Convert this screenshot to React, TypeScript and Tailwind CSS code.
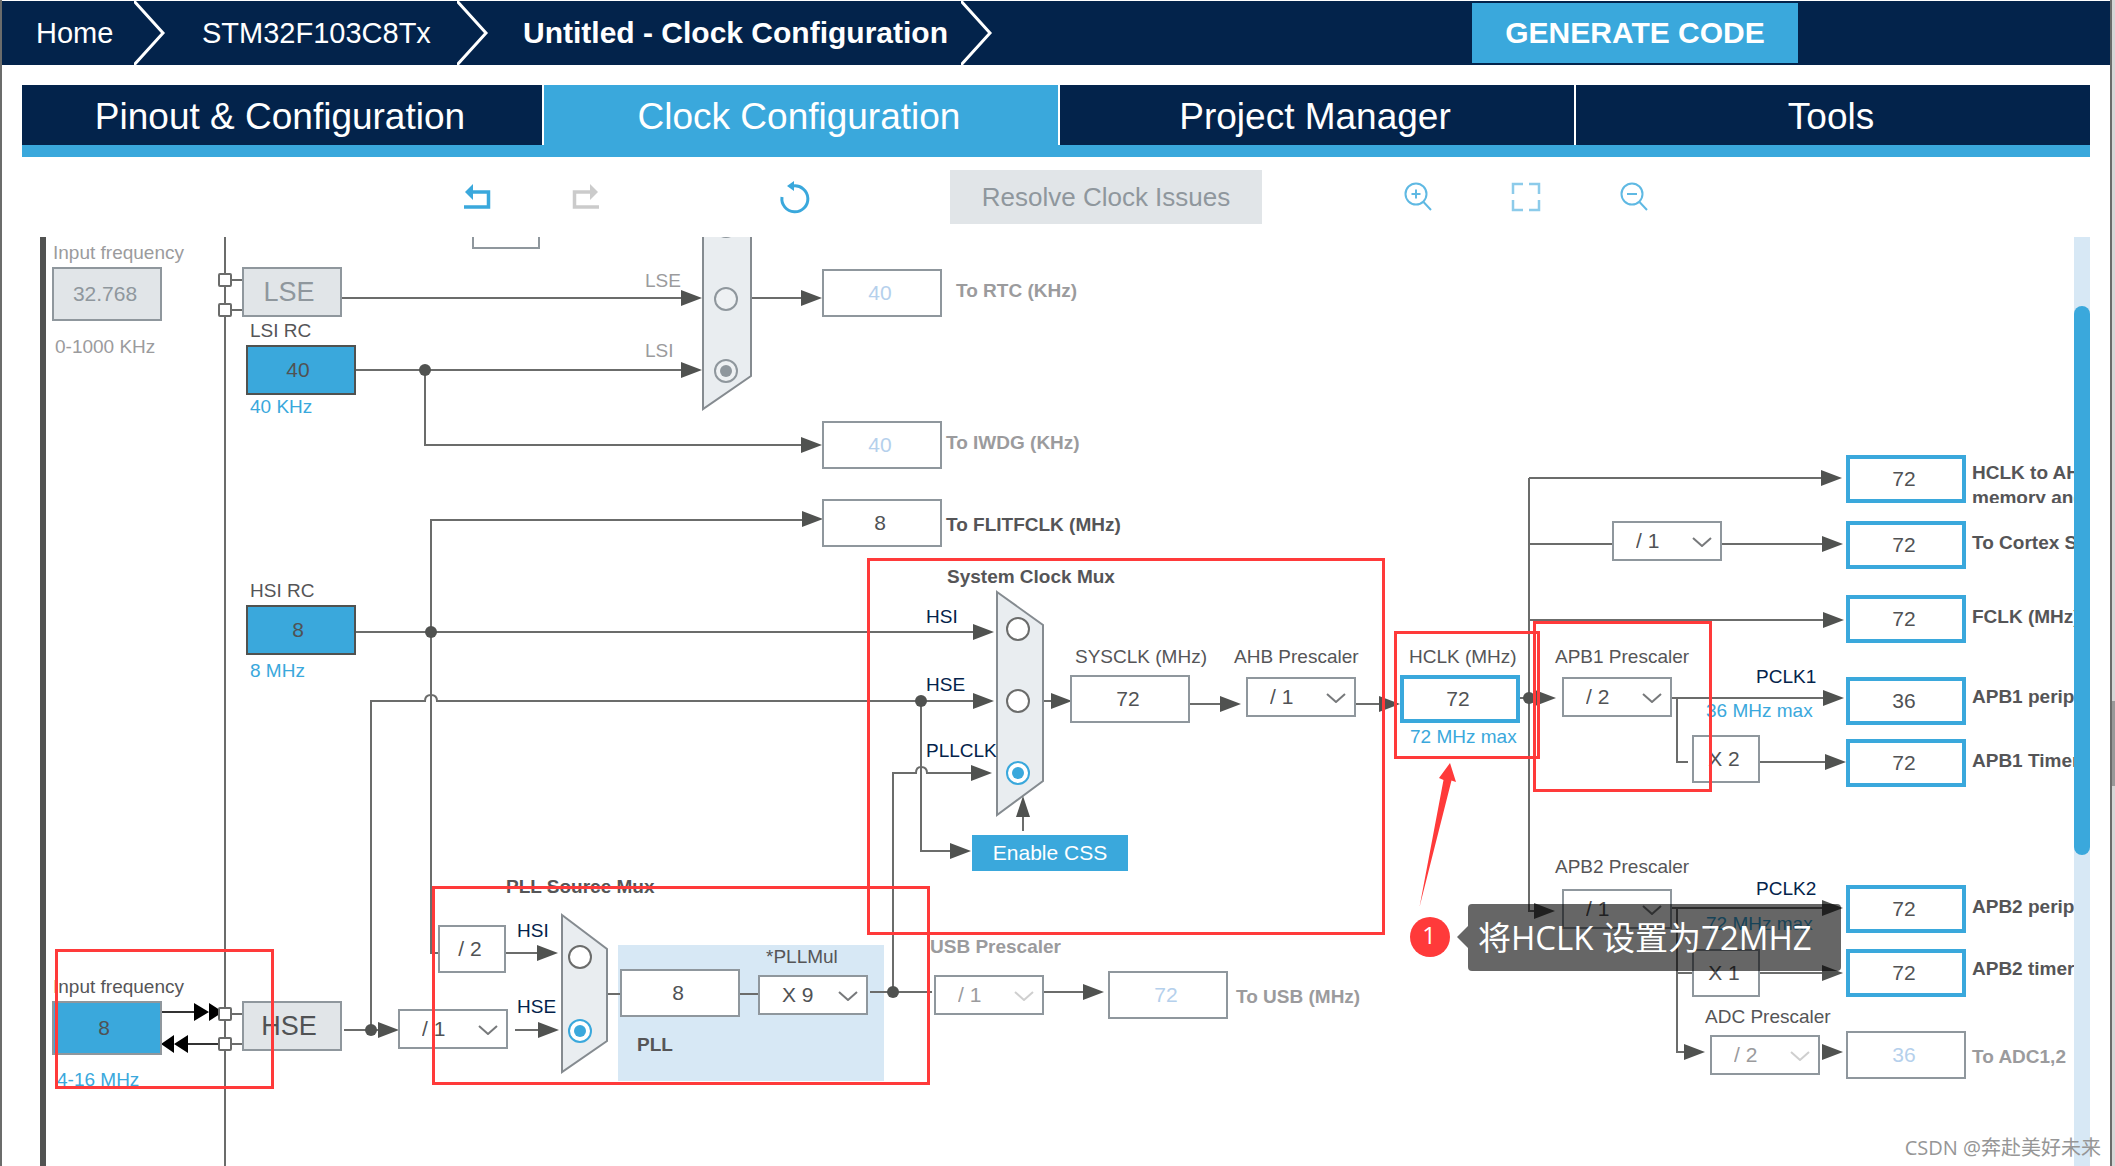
import type { ReactNode } from "react";
import clsx from "clsx";

type Tone = "dark" | "muted" | "navy" | "blue";

const tones: Record<Tone, string> = {
  dark: "text-[#555557]",
  muted: "text-[#9b9b9d]",
  navy: "text-[#03234b]",
  blue: "text-[#3aa8dc]",
};

type LabelItem = {
  x: number;
  y: number; // text baseline
  text: string;
  tone?: Tone;
  bold?: boolean;
  htmlFor?: string;
};

const labels: LabelItem[] = [
  { x: 53, y: 260, text: "Input frequency", tone: "muted", htmlFor: "lse-freq" },
  { x: 55, y: 354, text: "0-1000 KHz", tone: "muted" },
  { x: 250, y: 338, text: "LSI RC" },
  { x: 250, y: 414, text: "40 KHz", tone: "blue" },
  { x: 250, y: 598, text: "HSI RC" },
  { x: 250, y: 678, text: "8 MHz", tone: "blue" },
  { x: 53, y: 994, text: "Input frequency", htmlFor: "hse-freq" },
  { x: 57, y: 1087, text: "4-16 MHz", tone: "blue" },
  { x: 645, y: 288, text: "LSE", tone: "muted" },
  { x: 645, y: 358, text: "LSI", tone: "muted" },
  { x: 956, y: 298, text: "To RTC (KHz)", tone: "muted", bold: true, htmlFor: "rtc" },
  { x: 946, y: 450, text: "To IWDG (KHz)", tone: "muted", bold: true, htmlFor: "iwdg" },
  { x: 946, y: 532, text: "To FLITFCLK (MHz)", bold: true, htmlFor: "flitf" },
  { x: 947, y: 584, text: "System Clock Mux", bold: true },
  { x: 926, y: 624, text: "HSI", tone: "navy", htmlFor: "sys-hsi" },
  { x: 926, y: 692, text: "HSE", tone: "navy", htmlFor: "sys-hse" },
  { x: 926, y: 758, text: "PLLCLK", tone: "navy", htmlFor: "sys-pll" },
  { x: 1075, y: 664, text: "SYSCLK (MHz)", htmlFor: "sysclk" },
  { x: 1234, y: 664, text: "AHB Prescaler", htmlFor: "ahb" },
  { x: 1409, y: 664, text: "HCLK (MHz)", htmlFor: "hclk" },
  { x: 1410, y: 744, text: "72 MHz max", tone: "blue" },
  { x: 1555, y: 664, text: "APB1 Prescaler", htmlFor: "apb1" },
  { x: 1756, y: 684, text: "PCLK1", tone: "navy" },
  { x: 1706, y: 718, text: "36 MHz max", tone: "blue" },
  { x: 1555, y: 874, text: "APB2 Prescaler", htmlFor: "apb2" },
  { x: 1756, y: 896, text: "PCLK2", tone: "navy" },
  { x: 1706, y: 931, text: "72 MHz max", tone: "blue" },
  { x: 1705, y: 1024, text: "ADC Prescaler", htmlFor: "adc-div" },
  { x: 506, y: 894, text: "PLL Source Mux", bold: true },
  { x: 517, y: 938, text: "HSI", tone: "navy", htmlFor: "pll-hsi" },
  { x: 517, y: 1014, text: "HSE", tone: "navy", htmlFor: "pll-hse" },
  { x: 766, y: 964, text: "*PLLMul", htmlFor: "pllmul" },
  { x: 637, y: 1052, text: "PLL", bold: true },
  { x: 930, y: 954, text: "USB Prescaler", tone: "muted", bold: true, htmlFor: "usb-div" },
  { x: 1236, y: 1004, text: "To USB (MHz)", tone: "muted", bold: true, htmlFor: "usb" },
  { x: 1972, y: 550, text: "To Cortex System timer (MHz)", bold: true, htmlFor: "cortex" },
  { x: 1972, y: 624, text: "FCLK (MHz)", bold: true, htmlFor: "fclk" },
  { x: 1972, y: 704, text: "APB1 peripheral clocks (MHz)", bold: true, htmlFor: "apb1-periph" },
  { x: 1972, y: 768, text: "APB1 Timer clocks (MHz)", bold: true, htmlFor: "apb1-timer" },
  { x: 1972, y: 914, text: "APB2 peripheral clocks (MHz)", bold: true, htmlFor: "apb2-periph" },
  { x: 1972, y: 976, text: "APB2 timer clocks (MHz)", bold: true, htmlFor: "apb2-timer" },
  { x: 1972, y: 1064, text: "To ADC1,2", tone: "muted", bold: true, htmlFor: "adc" },
];

type Field = { id: string; x: number; y: number; value: string; kind: "target" | "plain" | "idle" };

const fields: Field[] = [
  { id: "rtc", x: 822, y: 269, value: "40", kind: "idle" },
  { id: "iwdg", x: 822, y: 421, value: "40", kind: "idle" },
  { id: "flitf", x: 822, y: 499, value: "8", kind: "plain" },
  { id: "sysclk", x: 1070, y: 675, value: "72", kind: "plain" },
  { id: "hclk", x: 1400, y: 675, value: "72", kind: "target" },
  { id: "pll-in", x: 620, y: 969, value: "8", kind: "plain" },
  { id: "usb", x: 1108, y: 971, value: "72", kind: "idle" },
  { id: "ahb-bus", x: 1846, y: 455, value: "72", kind: "target" },
  { id: "cortex", x: 1846, y: 521, value: "72", kind: "target" },
  { id: "fclk", x: 1846, y: 595, value: "72", kind: "target" },
  { id: "apb1-periph", x: 1846, y: 677, value: "36", kind: "target" },
  { id: "apb1-timer", x: 1846, y: 739, value: "72", kind: "target" },
  { id: "apb2-periph", x: 1846, y: 885, value: "72", kind: "target" },
  { id: "apb2-timer", x: 1846, y: 949, value: "72", kind: "target" },
  { id: "adc", x: 1846, y: 1031, value: "36", kind: "idle" },
];

const fieldKinds = {
  target: "border-4 border-[#3aa8dc] text-[#505254]",
  plain: "border-2 border-[#8f979d] text-[#505254]",
  idle: "border-2 border-[#8f979d] text-[#b5d0ec]",
};

const dividers = [
  { id: "ahb", x: 1246, y: 677, value: "/ 1" },
  { id: "cortex-div", x: 1612, y: 521, value: "/ 1" },
  { id: "apb1", x: 1562, y: 677, value: "/ 2" },
  { id: "apb2", x: 1562, y: 889, value: "/ 1" },
  { id: "adc-div", x: 1710, y: 1035, value: "/ 2", disabled: true },
  { id: "hse-div", x: 398, y: 1009, value: "/ 1" },
  { id: "pllmul", x: 758, y: 975, value: "X 9" },
  { id: "usb-div", x: 934, y: 975, value: "/ 1", disabled: true },
];

const factors = [
  { x: 438, y: 925, text: "/ 2" },
  { x: 1692, y: 735, text: "X 2" },
  { x: 1692, y: 949, text: "X 1" },
];

const radios = [
  { id: "rtc-hse", name: "rtc-mux", x: 726, y: 226, disabled: true },
  { id: "rtc-lse", name: "rtc-mux", x: 726, y: 299, disabled: true },
  { id: "rtc-lsi", name: "rtc-mux", x: 726, y: 371, disabled: true, checked: true },
  { id: "sys-hsi", name: "sys-mux", x: 1018, y: 629 },
  { id: "sys-hse", name: "sys-mux", x: 1018, y: 701 },
  { id: "sys-pll", name: "sys-mux", x: 1018, y: 773, checked: true },
  { id: "pll-hsi", name: "pll-mux", x: 580, y: 957 },
  { id: "pll-hse", name: "pll-mux", x: 580, y: 1031, checked: true },
];

const wires = [
  "M225 237V1166",
  "M232 280H242M232 310H242M232 1014H242M232 1044H242",
  "M342 298H690M751 298H810",
  "M356 370H690M425 370V445H810",
  "M356 632H980M431 632V520H815M431 632V953H438",
  "M371 1030V701H425Q425 695 431 695Q437 695 437 701H980",
  "M344 1030H390",
  "M921 701V851H960",
  "M893 992V773H916Q916 767 921 767Q927 767 927 773H980",
  "M1023 831V810",
  "M1043 701H1060",
  "M1190 704H1230M1356 704H1390",
  "M1520 698H1545M1529 478V911H1540M1529 478H1830",
  "M1529 544H1612M1722 544H1830M1529 620H1830",
  "M1672 698H1830M1677 698V762H1688M1760 762H1830",
  "M1672 908H1830M1677 908V1052H1690M1677 973H1692M1760 973H1830",
  "M506 953H545M515 1030H545",
  "M607 994H620M740 994H758M870 992H932M1044 992H1090",
];

// tips of the right-pointing arrow heads
const heads = [
  [702, 298], [702, 370], [822, 298], [822, 445], [823, 519], [994, 632], [994, 701], [992, 773],
  [971, 851], [1072, 701], [1241, 704], [1400, 704], [1556, 698], [1842, 478], [1843, 544], [1844, 620],
  [1844, 698], [1846, 762], [1555, 911], [1843, 908], [1843, 973], [1705, 1052], [1843, 1052],
  [399, 1030], [558, 953], [559, 1030], [1104, 992],
];

const dots = [[425, 370], [431, 632], [921, 701], [371, 1030], [893, 992], [1529, 698]];

const muxes = [
  "703,150 751,190 751,376 703,409",
  "997,592 1043,625 1043,781 997,815",
  "562,915 607,949 607,1041 562,1072",
];

const marks = [
  { x: 867, y: 558, width: 518, height: 377 },
  { x: 1394, y: 631, width: 146, height: 128 },
  { x: 1533, y: 621, width: 179, height: 171 },
  { x: 55, y: 949, width: 219, height: 140 },
  { x: 432, y: 886, width: 498, height: 199 },
];

const Crumb = ({ children, className }: { children: ReactNode; className: string }) => (
  <>
    <a href="#" className={clsx("leading-none whitespace-nowrap shrink-0", className)}>
      {children}
    </a>
    <svg viewBox="0 0 32 64" className="w-8 h-16 shrink-0" fill="none" stroke="#fff" strokeWidth="3">
      <path d="M0 0L29 32L0 64" />
    </svg>
  </>
);

const ToolButton = ({ label, className, children }: { label: string; className?: string; children: ReactNode }) => (
  <button type="button" aria-label={label} className={clsx("size-7 shrink-0", className)}>
    <svg viewBox="0 0 28 28" className="size-7 overflow-visible" fill="none" stroke="currentColor">
      {children}
    </svg>
  </button>
);

const Toolbar = () => (
  <div className="flex items-center justify-center h-20 text-[#3aa8dc]">
    <ToolButton label="Undo">
      <path d="M0 24H24.5V9H6" strokeWidth="3.5" />
      <path d="M1 9L9 1V17Z" fill="currentColor" stroke="none" />
    </ToolButton>
    <ToolButton label="Redo" className="ml-20 text-[#cbcbcb]">
      <path d="M27 24H2.5V9H20" strokeWidth="3.5" />
      <path d="M26 9L18 1V17Z" fill="currentColor" stroke="none" />
    </ToolButton>
    <ToolButton label="Reset" className="ml-[180px]">
      <path d="M2 14A13 13 0 1 0 13 3" strokeWidth="3" />
      <path d="M7 3L14 -2V8Z" fill="currentColor" stroke="none" />
    </ToolButton>
    <button type="button" disabled className="mx-[142px] w-[312px] h-[54px] shrink-0 bg-[#e1e5e8] text-[26px] text-[#8f979d]">
      Resolve Clock Issues
    </button>
    <ToolButton label="Zoom in" className="text-[#5fb9e3]">
      <circle cx="12" cy="11" r="10.5" strokeWidth="2" />
      <path d="M7.500 11H16.500M12 6.500V15.500M19.500 19L27 27" strokeWidth="2" />
    </ToolButton>
    <ToolButton label="Fit to window" className="ml-20 text-[#8ccbea]">
      <path d="M1 11V1H11M17 1H27V11M27 17V27H17M11 27H1V17" strokeWidth="2.500" />
    </ToolButton>
    <ToolButton label="Zoom out" className="ml-20 text-[#5fb9e3]">
      <circle cx="12" cy="11" r="10.5" strokeWidth="2" />
      <path d="M7 11H17M19.500 19L27 27" strokeWidth="2" />
    </ToolButton>
  </div>
);

const Label = ({ x, y, text, tone = "dark", bold, htmlFor }: LabelItem) => (
  <label
    htmlFor={htmlFor}
    className={clsx("absolute text-[19px] leading-6 whitespace-nowrap", tones[tone], bold && "font-bold")}
    style={{ left: x, top: y - 19 }}
  >
    {text}
  </label>
);

const Divider = ({ id, x, y, value, disabled }: (typeof dividers)[number]) => (
  <div className="absolute" style={{ left: x, top: y }}>
    <select
      id={id}
      aria-label={id}
      defaultValue={value}
      disabled={disabled}
      className={clsx(
        "block appearance-none w-[110px] h-10 pl-[22px] border-2 border-[#8f979d] bg-white text-[21px] opacity-100",
        disabled ? "text-[#9b9b9d]" : "text-[#505254]"
      )}
    >
      <option>{value}</option>
      <option>/ 4</option>
      <option>/ 8</option>
    </select>
    <svg
      viewBox="0 0 20 10"
      className={clsx("absolute right-2.5 top-4 w-5 h-2.5 pointer-events-none", disabled ? "text-[#cfcfcf]" : "text-[#77797b]")}
      fill="none"
      stroke="currentColor"
      strokeWidth="2"
    >
      <path d="M1 1L10 9L19 1" />
    </svg>
  </div>
);

const Wiring = () => (
  <svg width="2115" height="1166" viewBox="0 0 2115 1166" className="absolute left-0 top-0 max-w-none">
    <rect x="618" y="945" width="266" height="136" fill="#d7e8f5" />
    <rect x="40" y="237" width="6" height="929" fill="#525352" />
    <rect x="473" y="200" width="66" height="48" fill="#fff" stroke="#8f979d" strokeWidth="2" />
    <g fill="none" stroke="#6b6c6b" strokeWidth="2">
      {wires.map((d) => (
        <path key={d} d={d} />
      ))}
    </g>
    <g fill="#e9edf0" stroke="#858b90" strokeWidth="2">
      {muxes.map((points) => (
        <polygon key={points} points={points} />
      ))}
    </g>
    <g fill="#505250">
      {heads.map(([x, y]) => (
        <path key={`${x}-${y}`} d={`M${x} ${y}l-21 -8v16z`} />
      ))}
      <path d="M1023 796l-7 21h14z" />
      {dots.map(([cx, cy]) => (
        <circle key={`${cx}-${cy}`} cx={cx} cy={cy} r="6" />
      ))}
    </g>
    {/* crystal in / out */}
    <path d="M162 1012H200M188 1044H218" stroke="#333" strokeWidth="2" />
    <path d="M209 1012l-15 -9v18zM223 1012l-14 -9v18zM161 1044l13 -9v18zM174 1044l14 -9v18z" fill="#000" />
    <g fill="#fff" stroke="#6b6c6b" strokeWidth="2">
      {[280, 310, 1014, 1044].map((cy) => (
        <rect key={cy} x="219" y={cy - 6} width="12" height="12" rx="1" />
      ))}
    </g>
  </svg>
);

const ClockTree = () => (
  <div className="absolute -left-0.5 -top-[237px] w-[2115px] h-[1166px]">
    <Wiring />

    <input
      id="lse-freq"
      defaultValue="32.768"
      disabled
      className="absolute left-[52px] top-[267px] w-[110px] h-[54px] pr-1 border-2 border-[#8f979d] bg-[#e1e5e8] text-center text-[21px] text-[#8f979d]"
    />
    <input
      id="hse-freq"
      defaultValue="8"
      className="absolute left-[52px] top-[1001px] w-[110px] h-[54px] pr-1.5 border-2 border-[#8f979d] bg-[#3aa8dc] text-center text-[21px] text-[#505254]"
    />
    <button
      type="button"
      disabled
      className="absolute left-[242px] top-[267px] w-[100px] h-[50px] pr-1.5 border-2 border-[#8f979d] bg-[#e1e5e8] text-[27px] text-[#8f979d]"
    >
      LSE
    </button>
    <button
      type="button"
      className="absolute left-[242px] top-[1001px] w-[100px] h-[50px] pr-1.5 border-2 border-[#8f979d] bg-[#e1e5e8] text-[27px] text-[#505254]"
    >
      HSE
    </button>
    <output className="absolute left-[246px] top-[345px] w-[110px] h-[50px] pr-1.5 flex items-center justify-center border-2 border-[#505250] bg-[#3aa8dc] text-[21px] text-[#505254]">
      40
    </output>
    <output className="absolute left-[246px] top-[605px] w-[110px] h-[50px] pr-1.5 flex items-center justify-center border-2 border-[#505250] bg-[#3aa8dc] text-[21px] text-[#505254]">
      8
    </output>
    <button type="button" className="absolute left-[972px] top-[835px] w-[156px] h-9 bg-[#3aa8dc] text-[21px] text-white">
      Enable CSS
    </button>

    {fields.map(({ id, x, y, value, kind }) => (
      <input
        key={id}
        id={id}
        aria-label={id}
        defaultValue={value}
        readOnly={kind !== "target"}
        className={clsx("absolute w-[120px] h-12 pr-1 bg-white text-center text-[21px]", fieldKinds[kind])}
        style={{ left: x, top: y }}
      />
    ))}
    {factors.map(({ x, y, text }) => (
      <div
        key={`${x}-${y}`}
        className="absolute w-[68px] h-12 pr-1 flex items-center justify-center border-2 border-[#8f979d] bg-white text-[21px] text-[#505254]"
        style={{ left: x, top: y }}
      >
        {text}
      </div>
    ))}
    {dividers.map((divider) => (
      <Divider key={divider.id} {...divider} />
    ))}
    {radios.map(({ id, name, x, y, disabled, checked }) => (
      <input
        key={id}
        id={id}
        type="radio"
        name={name}
        aria-label={id}
        disabled={disabled}
        defaultChecked={checked}
        className={clsx(
          "absolute size-6 appearance-none rounded-full border-2 before:block before:size-3 before:m-1 before:rounded-full",
          disabled
            ? "border-[#8f979d] bg-[#eef1f3] checked:before:bg-[#8f979d]"
            : "border-[#6b6c6b] bg-white checked:border-[#3aa8dc] checked:before:bg-[#3aa8dc]"
        )}
        style={{ left: x - 12, top: y - 12 }}
      />
    ))}
    {labels.map((label) => (
      <Label key={`${label.x}-${label.y}`} {...label} />
    ))}
    <label
      htmlFor="ahb-bus"
      className="absolute left-[1972px] top-[460px] h-[43px] overflow-hidden text-[19px] leading-[25px] font-bold whitespace-nowrap text-[#555557]"
    >
      HCLK to AHB bus, core,
      <br />
      memory and DMA (MHz)
    </label>

    {/* hand-placed notes over the tree */}
    <svg width="2115" height="1166" viewBox="0 0 2115 1166" className="absolute left-0 top-0 max-w-none pointer-events-none">
      {marks.map(({ x, y, width, height }) => (
        <rect
          key={`${x}-${y}`}
          x={x + 1.5}
          y={y + 1.5}
          width={width - 3}
          height={height - 3}
          fill="none"
          stroke="#ff3a3a"
          strokeWidth="3"
        />
      ))}
      <path d="M1419.500 907L1443.500 780L1439 778L1450 763L1456 782L1451.500 780.500Z" fill="#ff3a3a" />
      <path d="M1457 937L1468 926V948Z" fill="#666" />
    </svg>
    <span className="absolute left-[1410px] top-[917px] size-10 rounded-full bg-[#ff3a3a] flex items-center justify-center pb-1 pr-0.5 font-['Open_Sans',sans-serif] text-2xl leading-none text-white">
      1
    </span>
    <div className="absolute left-[1468px] top-[904px] w-[373px] h-[67px] pl-2.5 rounded-sm flex items-center bg-black/60 text-white font-['Open_Sans','Noto_Sans_CJK_SC',sans-serif] text-[33px] leading-none whitespace-nowrap">
      将HCLK 设置为72MHZ
    </div>
  </div>
);

const tabs = [
  { title: "Pinout & Configuration", className: "flex-[520] bg-[#03234b]" },
  { title: "Clock Configuration", className: "flex-[514] bg-[#3aa8dc]" },
  { title: "Project Manager", className: "flex-[514] bg-[#03234b]" },
  { title: "Tools", className: "flex-[514] bg-[#03234b]" },
];

const App = () => {
  return (
    <div className="relative flex h-screen bg-white font-['Liberation_Sans',Arial,sans-serif]">
      <main className="flex-1 min-w-0 flex flex-col pt-px border-l-2 border-[#6b6c6b]">
        <header className="flex items-center h-16 shrink-0 bg-[#03234b] text-white overflow-hidden">
          <Crumb className="w-[132px] pl-[34px] text-[29px]">Home</Crumb>
          <Crumb className="w-[291px] pl-9 text-[29px]">STM32F103C8Tx</Crumb>
          <Crumb className="w-[472px] pl-[34px] text-[30px] font-bold">Untitled - Clock Configuration</Crumb>
          <div className="flex-[479]" />
          <button type="button" className="w-[326px] h-[60px] shrink-0 bg-[#3aa8dc] text-[30px] font-bold leading-none">
            GENERATE CODE
          </button>
          <div className="flex-[312]" />
        </header>

        <nav className="flex gap-0.5 mt-5 mx-5 h-[72px] shrink-0 border-b-12 border-[#3aa8dc]">
          {tabs.map(({ title, className }) => (
            <button
              key={title}
              type="button"
              className={clsx("pt-0.5 pr-1 text-[37px] leading-none text-white whitespace-nowrap", className)}
            >
              {title}
            </button>
          ))}
        </nav>

        <Toolbar />

        <div className="flex flex-1 min-h-0 pr-5">
          <div className="relative flex-1 overflow-hidden">
            <ClockTree />
          </div>
          <div className="w-4 pt-[69px] bg-[#d7e8f5]">
            <div className="h-[549px] rounded-full bg-[#3aa8dc]" />
          </div>
        </div>
      </main>

      <div className="w-[5px] pt-[701px] border-l-2 border-[#6b6c6b] bg-[#d6d6d6]">
        <div className="h-[85px] bg-[#999]" />
      </div>

      <div className="absolute right-3.5 bottom-1.5 font-['Open_Sans','Noto_Sans_CJK_SC',sans-serif] text-xl leading-6 text-[#969696] whitespace-nowrap">
        CSDN @奔赴美好未来
      </div>
    </div>
  );
};

export default App;
